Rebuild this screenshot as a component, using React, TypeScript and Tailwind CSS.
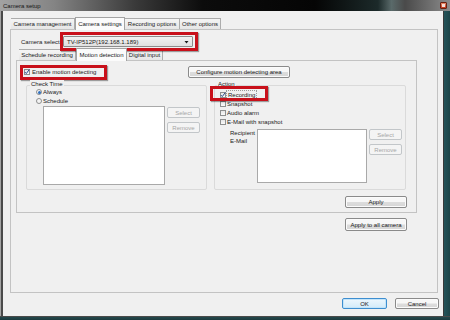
import React from "react";

const FONT = "font-['Liberation_Sans',Arial,sans-serif]";

function Btn({
  w,
  h = 12,
  label,
  disabled,
  primary,
}: {
  w: string;
  h?: number;
  label: string;
  disabled?: boolean;
  primary?: boolean;
}) {
  const base =
    "flex items-center justify-center rounded-[2px] border text-[6px] leading-[8px] shrink-0 " +
    w +
    (h === 11 ? " h-[11px]" : h === 13 ? " h-[13px]" : " h-[12px]");
  const look = disabled
    ? " border-[#c2c6c9] bg-[#f4f4f4] text-[#a6a6a6]"
    : primary
    ? " border-[#3d8ed0] bg-[linear-gradient(#eef7fd,#d2eaf9)] text-[#1a1a1a] shadow-[inset_0_0_0_1px_#c4e4f9]"
    : " border-[#8a8a8a] bg-[linear-gradient(#f7f7f7_45%,#dcdcdc_55%,#d6d6d6)] text-[#1a1a1a] shadow-[inset_0_0_0_1px_#fbfbfb]";
  return <div className={base + look}>{label}</div>;
}

function Check({ checked }: { checked?: boolean }) {
  return (
    <div className="w-[6px] h-[6px] border border-[#8e8f8f] bg-[linear-gradient(#e6e6e6,#fafafa)] shrink-0 flex items-center justify-center">
      {checked && (
        <svg width="6" height="6" viewBox="0 0 6 6" className="overflow-visible">
          <path d="M0.8 3 L2.3 4.6 L5.2 0.6" stroke="#2c4f8f" strokeWidth="1" fill="none" />
        </svg>
      )}
    </div>
  );
}

function Radio({ checked }: { checked?: boolean }) {
  return (
    <div className="w-[6px] h-[6px] rounded-full border border-[#8e8f8f] bg-[#f4f4f4] shrink-0 flex items-center justify-center">
      {checked && <div className="w-[3px] h-[3px] rounded-full bg-[#2d6fc0]" />}
    </div>
  );
}

function Tab({
  w,
  label,
  selected,
}: {
  w: string;
  label: string;
  selected?: boolean;
}) {
  return selected ? (
    <div
      className={
        "relative z-10 -mb-[1px] h-[13px] flex items-center justify-center border border-b-0 border-[#a3a3a3] bg-[#fbfbfb] text-[6px] leading-[8px] shrink-0 " +
        w
      }
    >
      {label}
    </div>
  ) : (
    <div
      className={
        "h-[11px] flex items-center justify-center border border-b-0 border-l-0 border-[#acacac] bg-[linear-gradient(#f5f5f5,#e6e6e6)] text-[6px] leading-[8px] shrink-0 " +
        w
      }
    >
      {label}
    </div>
  );
}

function RedBox({ cls }: { cls: string }) {
  return (
    <div
      className={
        "absolute border-[3px] border-[#c8101a] shadow-[1px_1px_1px_rgba(0,0,0,0.35)] pointer-events-none " +
        cls
      }
    />
  );
}

export default function App() {
  return (
    <div
      className={
        "w-[450px] h-[320px] flex flex-col overflow-hidden text-[#1a1a1a] text-[6px] leading-[8px] " +
        FONT
      }
    >
      {/* Title bar */}
      <div className="relative h-[11px] shrink-0 flex items-center bg-[linear-gradient(to_right,#a2a2a2_0%,#848484_12%,#3a3a3a_30%,#0c0c0c_45%,#050505_70%,#1c2a2a_84%,#5a6a6a_87%,#4a4a4a_90%,#8c8c8c_100%)]">
        <span className="pl-[3px] text-[6px] leading-[8px] text-[#151515]">Camera setup</span>
        <div className="absolute right-[3px] top-[2px] w-[7px] h-[7px] rounded-[1px] border border-[#6a2010] bg-[linear-gradient(#e88a6a,#c0381c)] flex items-center justify-center">
          <div className="w-[3px] h-[3px] bg-[#f4e0d8]" />
        </div>
      </div>

      <div className="flex h-[305px] shrink-0">
        {/* left frame */}
        <div className="w-[3px] bg-[linear-gradient(to_right,#a4a4a4_34%,#4a4a4a_34%)]" />

        {/* client */}
        <div className="w-[440px] bg-[#f0f0f0] flex flex-col">
          {/* outer tabs */}
          <div className="mt-[6px] ml-[8px] h-[12px] flex items-end">
            <Tab w="w-[64px] border-l" label="Camera management" />
            <Tab w="w-[50px]" label="Camera settings" selected />
            <Tab w="w-[55px]" label="Recording options" />
            <Tab w="w-[41px]" label="Other options" />
          </div>

          {/* outer panel */}
          <div className="ml-[7px] w-[428px] h-[264px] border border-[#c3c3c3] bg-[#f0f0f0] flex flex-col">
            {/* Camera select row */}
            <div className="mt-[6px] ml-[10px] h-[11px] flex items-center">
              <span className="w-[42px]">Camera select</span>
              <div className="relative w-[130px] h-[11px] border border-[#8c8c8c] rounded-[1px] bg-[linear-gradient(#f2f2f2,#e0e0e0)] flex items-center">
                <span className="pl-[3px]">TV-IP512P(192.168.1.189)</span>
                <svg className="absolute right-[3px] top-[3px]" width="5" height="4" viewBox="0 0 5 4">
                  <path d="M0.5 1 L4.5 1 L2.5 3.5 Z" fill="#1a1a1a" />
                </svg>
                <RedBox cls="-left-[4px] -top-[5px] w-[138px] h-[19px]" />
              </div>
            </div>

            {/* inner tabs */}
            <div className="mt-[2px] ml-[8px] h-[11px] flex items-end">
              <Tab w="w-[57px] border-l" label="Schedule recording" />
              <Tab w="w-[51px]" label="Motion detection" selected />
              <Tab w="w-[36px]" label="Digital input" />
            </div>

            {/* inner panel */}
            <div className="ml-[5px] w-[401px] h-[153px] border border-[#c3c3c3] bg-[#f0f0f0] flex flex-col">
              {/* Row 1 */}
              <div className="relative mt-[5px] h-[12px] flex items-center">
                <div className="w-[171px] flex items-center pl-[7px] gap-[2px]">
                  <Check checked />
                  <span>Enable motion detecting</span>
                </div>
                <Btn w="w-[102px]" label="Configure motion detecting area" />
                <RedBox cls="left-[3px] -top-[1px] w-[87px] h-[15px]" />
              </div>

              {/* group boxes */}
              <div className="mt-[7px] flex">
                {/* Check Time */}
                <div className="relative ml-[9px] w-[181px] h-[105px] border border-[#dadada] rounded-[2px] flex flex-col">
                  <span className="absolute left-[3px] -top-[6px] px-[1px] bg-[#f0f0f0]">Check Time</span>
                  <div className="mt-[2px] ml-[9px] h-[8px] flex items-center gap-[1px]">
                    <Radio checked />
                    <span>Always</span>
                  </div>
                  <div className="mt-[1px] ml-[9px] h-[8px] flex items-center gap-[1px]">
                    <Radio />
                    <span>Schedule</span>
                  </div>
                  <div className="mt-[1px] ml-[16px] flex">
                    <div className="w-[122px] h-[79px] border border-[#a9a9a9] bg-white" />
                    <div className="ml-[2px] mt-[1px] flex flex-col gap-[4px]">
                      <Btn w="w-[33px]" h={11} label="Select" disabled />
                      <Btn w="w-[33px]" h={11} label="Remove" disabled />
                    </div>
                  </div>
                </div>

                {/* Action */}
                <div className="relative ml-[7px] w-[192px] h-[105px] border border-[#dadada] rounded-[2px] flex flex-col">
                  <span className="absolute left-[2px] -top-[6px] px-[1px] bg-[#f0f0f0]">Action</span>
                  <div className="relative mt-[5px] ml-[5px] h-[8px] flex items-center gap-[1px]">
                    <Check checked />
                    <span className="px-[1px] outline outline-1 outline-dotted outline-[#9a9a9a]">Recording</span>
                    <RedBox cls="-left-[10px] -top-[5px] w-[58px] h-[15px]" />
                  </div>
                  <div className="mt-[1px] ml-[5px] h-[8px] flex items-center gap-[1px]">
                    <Check />
                    <span>Snapshot</span>
                  </div>
                  <div className="mt-[1px] ml-[5px] h-[8px] flex items-center gap-[1px]">
                    <Check />
                    <span>Audio alarm</span>
                  </div>
                  <div className="mt-[1px] ml-[5px] h-[8px] flex items-center gap-[1px]">
                    <Check />
                    <span>E-Mail with snapshot</span>
                  </div>
                  <div className="mt-[3px] ml-[15px] flex">
                    <div className="w-[27px] flex flex-col">
                      <span>Recipient</span>
                      <span>E-Mail</span>
                    </div>
                    <div className="w-[110px] h-[54px] border border-[#a9a9a9] bg-white" />
                    <div className="ml-[2px] flex flex-col gap-[4px]">
                      <Btn w="w-[33px]" h={11} label="Select" disabled />
                      <Btn w="w-[33px]" h={11} label="Remove" disabled />
                    </div>
                  </div>
                </div>
              </div>

              {/* Apply */}
              <div className="mt-[6px] ml-[328px]">
                <Btn w="w-[62px]" label="Apply" />
              </div>
            </div>

            {/* Apply to all camera */}
            <div className="mt-[5px] ml-[334px]">
              <Btn w="w-[62px]" h={13} label="Apply to all camera" />
            </div>
          </div>

          {/* OK / Cancel */}
          <div className="mt-[5px] ml-[339px] flex gap-[8px]">
            <Btn w="w-[45px]" h={11} label="OK" primary />
            <Btn w="w-[44px]" h={11} label="Cancel" />
          </div>
        </div>

        {/* right frame */}
        <div className="w-[7px] bg-[linear-gradient(to_right,#3a3a3a_0px,#3a3a3a_1px,#25545a_1px,#1d4448_100%)]" />
      </div>

      {/* bottom frame */}
      <div className="h-[4px] shrink-0 bg-[linear-gradient(#4a4a4a_0px,#4a4a4a_1px,#24484c_1px,#1c3a3e_100%)]" />
    </div>
  );
}
